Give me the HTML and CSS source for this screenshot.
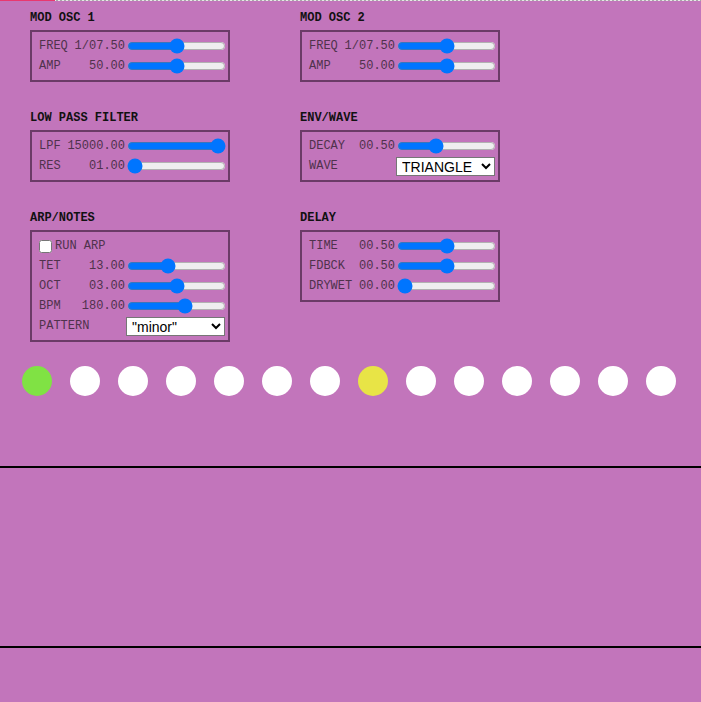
FILE: index.html
```html
<!DOCTYPE html>
<html>
<head>
<meta charset="utf-8">
<link rel="stylesheet" href="styles.css">
</head>
<body>
<div class="topbar"><div class="progress"></div></div>
<main class="panels">
  <section class="panel">
    <h2 class="title">MOD OSC 1</h2>
    <div class="box">
      <div class="row"><span class="lv"><span>FREQ</span><span>1/07.50</span></span><input class="slider" type="range" min="0" max="100" value="50"></div>
      <div class="row"><span class="lv"><span>AMP</span><span>50.00</span></span><input class="slider" type="range" min="0" max="100" value="50"></div>
    </div>
  </section>
  <section class="panel">
    <h2 class="title">MOD OSC 2</h2>
    <div class="box">
      <div class="row"><span class="lv"><span>FREQ</span><span>1/07.50</span></span><input class="slider" type="range" min="0" max="100" value="50"></div>
      <div class="row"><span class="lv"><span>AMP</span><span>50.00</span></span><input class="slider" type="range" min="0" max="100" value="50"></div>
    </div>
  </section>
  <section class="panel">
    <h2 class="title">LOW PASS FILTER</h2>
    <div class="box">
      <div class="row"><span class="lv"><span>LPF</span><span>15000.00</span></span><input class="slider" type="range" min="0" max="100" value="100"></div>
      <div class="row"><span class="lv"><span>RES</span><span>01.00</span></span><input class="slider" type="range" min="0" max="100" value="0"></div>
    </div>
  </section>
  <section class="panel">
    <h2 class="title">ENV/WAVE</h2>
    <div class="box">
      <div class="row"><span class="lv"><span>DECAY</span><span>00.50</span></span><input class="slider" type="range" min="0" max="100" value="37"></div>
      <div class="row"><span class="lv"><span>WAVE</span><span></span></span><select class="sel"><option>TRIANGLE</option><option>SINE</option><option>SQUARE</option><option>SAWTOOTH</option></select></div>
    </div>
  </section>
  <section class="panel">
    <h2 class="title">ARP/NOTES</h2>
    <div class="box">
      <div class="row"><label class="check"><input type="checkbox" class="cb"><span>RUN ARP</span></label></div>
      <div class="row"><span class="lv"><span>TET</span><span>13.00</span></span><input class="slider" type="range" min="0" max="100" value="40"></div>
      <div class="row"><span class="lv"><span>OCT</span><span>03.00</span></span><input class="slider" type="range" min="0" max="100" value="50"></div>
      <div class="row"><span class="lv"><span>BPM</span><span>180.00</span></span><input class="slider" type="range" min="0" max="100" value="60"></div>
      <div class="row"><span class="lv"><span>PATTERN</span><span></span></span><select class="sel"><option>"minor"</option><option>"major"</option></select></div>
    </div>
  </section>
  <section class="panel">
    <h2 class="title">DELAY</h2>
    <div class="box">
      <div class="row"><span class="lv"><span>TIME</span><span>00.50</span></span><input class="slider" type="range" min="0" max="100" value="50"></div>
      <div class="row"><span class="lv"><span>FDBCK</span><span>00.50</span></span><input class="slider" type="range" min="0" max="100" value="50"></div>
      <div class="row"><span class="lv"><span>DRYWET</span><span>00.00</span></span><input class="slider" type="range" min="0" max="100" value="0"></div>
    </div>
  </section>
</main>
<div class="steps">
  <span class="dot on"></span><span class="dot"></span><span class="dot"></span><span class="dot"></span><span class="dot"></span><span class="dot"></span><span class="dot"></span><span class="dot cur"></span><span class="dot"></span><span class="dot"></span><span class="dot"></span><span class="dot"></span><span class="dot"></span><span class="dot"></span>
</div>
<div class="scope"></div>
</body>
</html>
```
FILE: styles.css
```css
html, body {
  margin: 0;
  padding: 0;
}
body {
  background: #c275bb;
  font-family: "Liberation Mono", "DejaVu Sans Mono", monospace;
  font-size: 12px;
  min-height: 702px;
}
.topbar {
  height: 1px;
  background: repeating-linear-gradient(90deg, #a8a8a8 0 2px, #e8e8e8 2px 4px);
}
.progress {
  width: 55px;
  height: 1px;
  background: #e8386f;
}
.panels {
  display: grid;
  grid-template-columns: 200px 200px;
  column-gap: 70px;
  row-gap: 29px;
  padding: 10px 0 0 30px;
  align-items: start;
}
.title {
  margin: 0 0 5px 0;
  font-size: 12px;
  line-height: 14px;
  font-weight: bold;
  color: #111;
}
.box {
  border: 2px solid #6b3b67;
  padding: 4px 0 4px 7px;
}
.row {
  display: flex;
  align-items: center;
  height: 20px;
  color: #4f324c;
}
.lv {
  display: flex;
  justify-content: space-between;
  width: 86px;
  white-space: pre;
}
.slider {
  width: 99px;
  margin: 0 0 0 2px;
  height: 16px;
}
.sel {
  width: 99px;
  height: 19px;
  margin: 0 0 0 1px;
  padding-left: 1px;
  font-family: "Liberation Sans", Arial, sans-serif;
  font-size: 14px;
  background: #fff;
  color: #000;
  border: 1px solid #767676;
  border-radius: 0;
}
.check {
  display: flex;
  align-items: center;
}
.cb {
  width: 13px;
  height: 13px;
  margin: 0 3px 0 0;
}
.steps {
  display: flex;
  gap: 18px;
  padding: 24px 0 0 22px;
}
.dot {
  width: 30px;
  height: 30px;
  border-radius: 50%;
  background: #fff;
}
.dot.on {
  background: #80e244;
}
.dot.cur {
  background: #e8e446;
}
.scope {
  margin-top: 70px;
  height: 178px;
  border-top: 2px solid #000;
  border-bottom: 2px solid #000;
}
```
